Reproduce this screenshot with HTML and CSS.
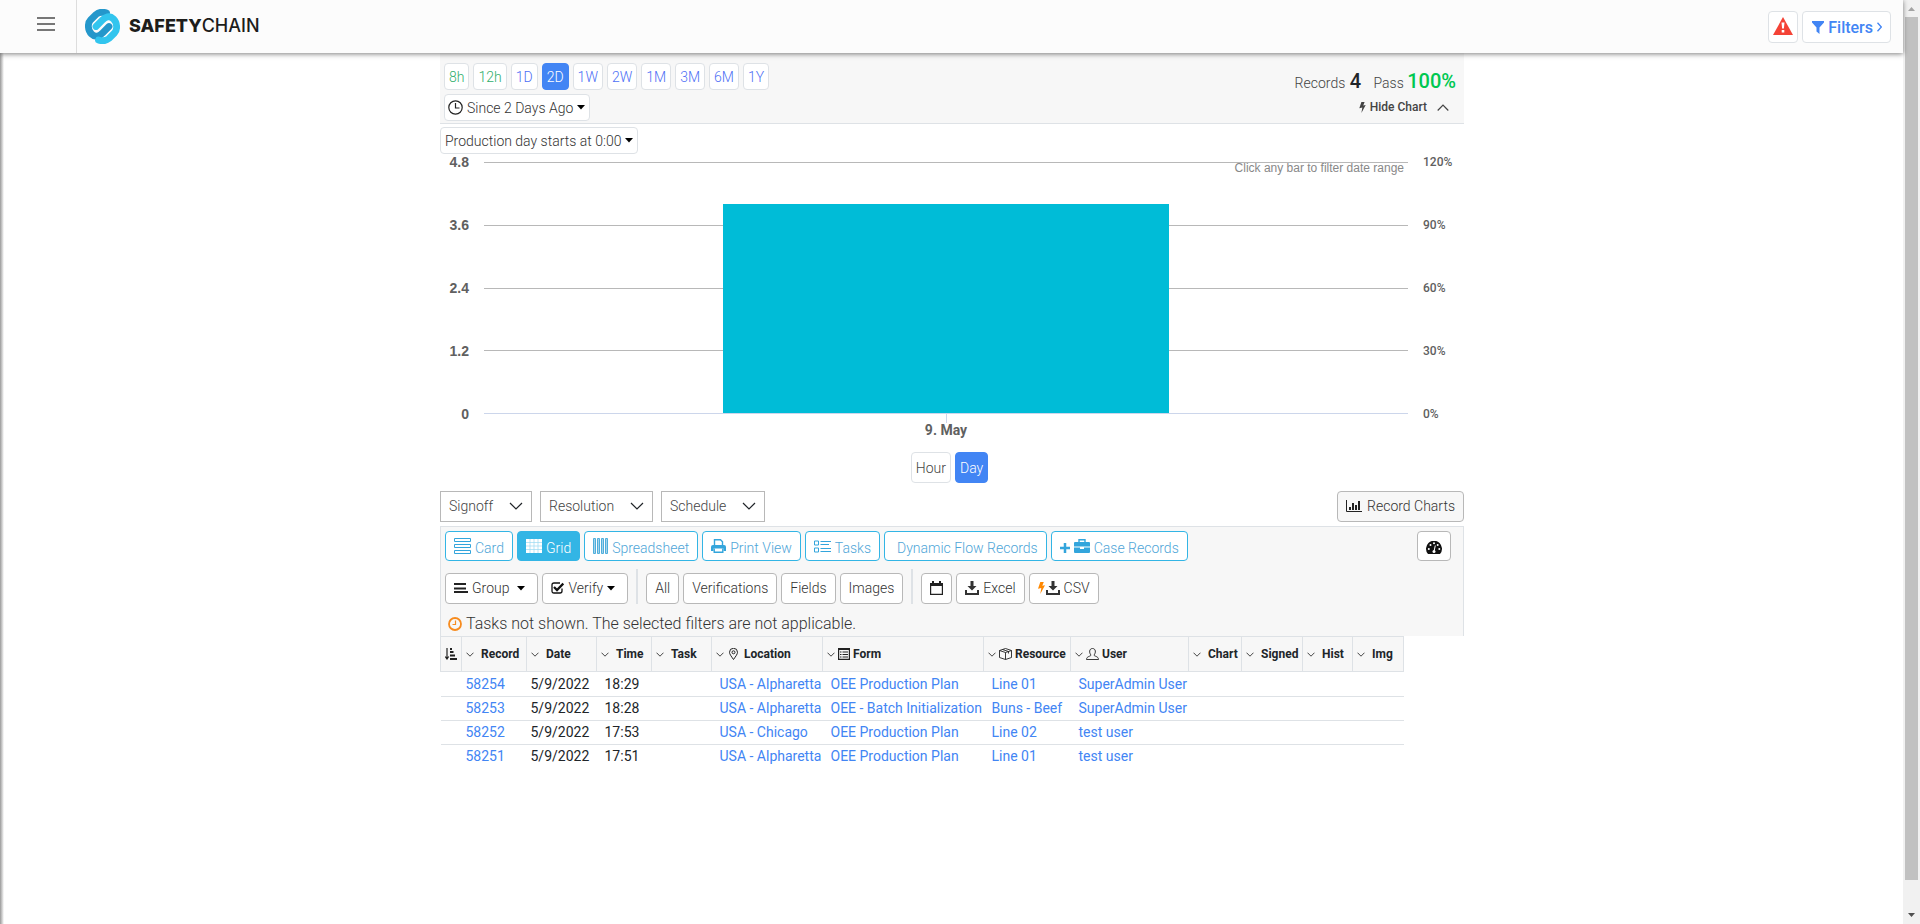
FILE: index.html
```html
<!DOCTYPE html>
<html lang="en">
<head>
<meta charset="utf-8">
<title>SafetyChain Records</title>
<link rel="stylesheet" href="styles.css">
</head>
<body>
<svg class="defs" aria-hidden="true">
  <symbol id="chev" viewBox="0 0 14 8"><path d="M1 1l6 6 6-6" fill="none" stroke="currentColor" stroke-width="1.2"/></symbol>
  <symbol id="chev-s" viewBox="0 0 8 5"><path d="M.5.7L4 4.2 7.500.7" fill="none" stroke="currentColor" stroke-width="1"/></symbol>
  <symbol id="caret" viewBox="0 0 8 5"><path d="M0 0h8L4 4.500z" fill="currentColor"/></symbol>
  <symbol id="download" viewBox="0 0 14 14"><path d="M5.500 0h3v5H11.500L7 9.500 2.500 5h3zM0 9h2v3h10V9h2v5H0z" fill="currentColor"/></symbol>
  <symbol id="bolt" viewBox="0 0 7 12"><path d="M2.300 0h3.500L4.300 3.800 7 3.300 2.300 12 3.300 6 0 6.700z" fill="currentColor"/></symbol>
</svg>
<div class="view">
  <header class="topbar">
    <button class="menu" aria-label="Menu"><svg width="18" height="14" viewBox="0 0 18 14"><path d="M0 1h18M0 7h18M0 13h18" stroke="#777" stroke-width="2"/></svg></button>
    <a class="brand" href="#">
      <svg width="35" height="35" viewBox="0 0 35 35" fill="none" stroke-width="6.800" stroke-linecap="round">
        <path d="M21.500 4C18 2.800 14 3 11 5.500L5.500 11C2.500 14 2.500 21 6.500 25S15 27 17.500 24L24 17.500" stroke="#2497cb"/>
        <path d="M13.500 31C17 32.200 21 32 24 29.500L29.500 24C32.500 21 32.500 14 28.500 10S20 8 17.500 11L11 17.500" stroke="#32c5ee"/>
      </svg>
      <span class="wordmark"><b>SAFETY</b>CHAIN</span>
    </a>
    <div class="top-actions">
      <button class="top-btn alert" aria-label="Alerts"><svg width="20" height="18" viewBox="0 0 20 18"><path d="M10 0l10 18H0z" fill="#f44336"/><path d="M8.500 5.500h3l-.6 6H9.100zM8.700 13h2.600v2.500H8.700z" fill="#fff"/></svg></button>
      <button class="top-btn filters"><svg width="12" height="13" viewBox="0 0 12 13"><path d="M0 0h12v1.500L7.500 6.500V13L4.500 10.500v-4L0 1.500z" fill="#4285f4"/></svg>Filters<svg width="5" height="10" viewBox="0 0 5 10"><path d="M.5.8L4.300 5 .5 9.200" fill="none" stroke="#4285f4" stroke-width="1.300"/></svg></button>
    </div>
  </header>
  <div class="page">
  <main class="content">
    <section class="summary">
      <div class="periods">
        <div class="row">
          <button class="pill green">8h</button><button class="pill green">12h</button><button class="pill">1D</button><button class="pill on">2D</button><button class="pill">1W</button><button class="pill">2W</button><button class="pill">1M</button><button class="pill">3M</button><button class="pill">6M</button><button class="pill">1Y</button>
        </div>
        <div class="row">
          <button class="pill dark since"><svg width="15" height="15" viewBox="0 0 15 15" fill="none" stroke="#222" stroke-width="1.200"><circle cx="7.500" cy="7.500" r="6.700"/><path d="M7.500 3v5h4"/></svg>Since 2 Days Ago<svg class="caret"><use href="#caret"/></svg></button>
        </div>
      </div>
      <div class="stats">
        <p class="totals"><span>Records</span> <strong class="count">4</strong> <span class="pass">Pass</span> <strong class="ok">100%</strong></p>
        <button class="hide-chart"><svg width="7" height="11"><use href="#bolt"/></svg>Hide Chart<svg class="up" width="12" height="7" viewBox="0 0 12 7"><path d="M.7 6.500L6 1l5.300 5.500" fill="none" stroke="#444" stroke-width="1.200"/></svg></button>
      </div>
    </section>
    <button class="pill dark day-start">Production day starts at 0:00<svg class="caret"><use href="#caret"/></svg></button>
    <section class="chart" aria-label="Records per day">
      <div class="axis left"><span>4.8</span><span>3.6</span><span>2.4</span><span>1.2</span><span>0</span></div>
      <div class="plot">
        <div class="lines"><i></i><i></i><i></i><i></i></div>
        <p class="hint">Click any bar to filter date range</p>
        <div class="bar"></div>
        <div class="tick"></div>
      </div>
      <div class="axis right"><span>120%</span><span>90%</span><span>60%</span><span>30%</span><span>0%</span></div>
      <div class="xlabel">9. May</div>
    </section>
    <div class="units"><button class="unit">Hour</button><button class="unit on">Day</button></div>
    <div class="selects">
      <label class="select"><select aria-label="Signoff"><option>Signoff</option></select><svg><use href="#chev"/></svg></label>
      <label class="select"><select aria-label="Resolution"><option>Resolution</option></select><svg><use href="#chev"/></svg></label>
      <label class="select"><select aria-label="Schedule"><option>Schedule</option></select><svg><use href="#chev"/></svg></label>
      <button class="tool charts"><svg width="16" height="12" viewBox="0 0 16 12"><path d="M.5 0v11.500H16" fill="none" stroke="#222" /><path d="M3 7h2v3H3zM6 3h2v7H6zM9 5h2v5H9zM12 1h2v9h-2z" fill="#222"/></svg>Record Charts</button>
    </div>
    <section class="panel">
      <div class="row views">
        <button class="view-btn"><svg width="17" height="16" viewBox="0 0 17 16" fill="none" stroke="#33a5dc"><path d="M.5.500h16v3H.5zM.5 6.500h16v3H.5zM.5 12.500h16v3H.5z"/></svg>Card</button>
        <button class="view-btn on"><svg width="16" height="14" viewBox="0 0 16 14"><path d="M0 0h16v14H0z" fill="#fff"/><path d="M0 3.500h16M0 7h16M0 10.500h16M4 0v14M8 0v14M12 0v14" stroke="#9bdaf2" stroke-width=".7"/></svg>Grid</button>
        <button class="view-btn"><svg width="15" height="16" viewBox="0 0 15 16" fill="#a5d3ea" stroke="#4eaedc"><path d="M.5.500h2v15h-2zM4.500.500h2v15h-2zM8.500.500h2v15h-2zM12.500.500h2v15h-2z"/></svg>Spreadsheet</button>
        <button class="view-btn"><svg width="15" height="14" viewBox="0 0 15 14"><path d="M3.500 7V.7h6l2 2V7" fill="none" stroke="#33a5dc" stroke-width="1.400"/><path d="M0 8q0-2 2-2h11q2 0 2 2v4h-2.500V9.500h-10V12H0z" fill="#33a5dc"/><path d="M3.200 9.500v3.800h8.600V9.500" fill="none" stroke="#33a5dc" stroke-width="1.400"/></svg>Print View</button>
        <button class="view-btn"><svg width="17" height="13" viewBox="0 0 17 13" fill="none" stroke="#33a5dc"><path d="M.5 1h4v4h-4zM.5 8h4v4h-4zM6.500 1.500H17M6.500 4.500H15M6.500 8.500H17M6.500 11.500H17"/></svg>Tasks</button>
        <button class="view-btn plain">Dynamic Flow Records</button>
        <button class="view-btn"><svg class="plus" width="10" height="10" viewBox="0 0 10 10"><path d="M5 0v10M0 5h10" stroke="#33a5dc" stroke-width="2.500"/></svg><svg width="16" height="14" viewBox="0 0 16 14"><path d="M5 3V.7h6V3" fill="none" stroke="#33a5dc" stroke-width="1.400"/><path d="M1 3h14q1 0 1 1v3.500H0V4q0-1 1-1zM0 8.500h6v1.500h4V8.500h6V13q0 1-1 1H1q-1 0-1-1z" fill="#33a5dc"/></svg>Case Records</button>
        <button class="tool gauge" aria-label="Dashboard"><svg width="16" height="13" viewBox="0 0 16 13"><path d="M2 13A8 8 0 1 1 14 13z" fill="#111"/><g fill="#fff"><circle cx="2.800" cy="8" r="1"/><circle cx="4.500" cy="4" r="1"/><circle cx="8" cy="2.300" r="1"/><circle cx="11.700" cy="4" r="1"/><circle cx="13.300" cy="8" r="1"/><circle cx="8" cy="10.500" r="1.500"/></g><path d="M8 10.500l1.300-6" stroke="#fff"/></svg></button>
      </div>
      <div class="row tools">
        <button class="tool drop"><svg width="14" height="10" viewBox="0 0 14 10" stroke="#222"><path d="M0 1h12M0 5.500h12M0 9h14" stroke-width="1.800"/></svg>Group<svg class="caret far"><use href="#caret"/></svg></button>
        <button class="tool drop"><svg width="13" height="12" viewBox="0 0 13 12" fill="none" stroke="#111"><path d="M11 6.500V9q0 2-2 2H3q-2 0-2-2V3q0-2 2-2h6" stroke-width="1.300"/><path d="M3 5l3 3 6.300-6.500" stroke-width="2.300"/></svg>Verify<svg class="caret"><use href="#caret"/></svg></button>
        <span class="sep"></span>
        <button class="tool">All</button><button class="tool">Verifications</button><button class="tool">Fields</button><button class="tool">Images</button>
        <span class="sep"></span>
        <button class="tool" aria-label="Calendar"><svg width="13" height="14" viewBox="0 0 13 14"><path d="M.6 3h11.800v10.400H.6z" fill="none" stroke="#222" stroke-width="1.200"/><path d="M0 2h13v3H0zM2 0h2v3H2zM9 0h2v3H9z" fill="#222"/></svg></button>
        <button class="tool"><svg width="14" height="14"><use href="#download"/></svg>Excel</button>
        <button class="tool"><svg class="bolt" width="7" height="12"><use href="#bolt"/></svg><svg width="14" height="14"><use href="#download"/></svg>CSV</button>
      </div>
      <p class="notice"><svg width="14" height="14" viewBox="0 0 14 14" fill="none" stroke="#f78b1e"><circle cx="7" cy="7" r="6" stroke-width="1.800"/><path d="M7.500 3.500v4H4.500" stroke-width="1.200"/></svg>Tasks not shown. The selected filters are not applicable.</p>
    </section>
    <table class="records">
      <colgroup><col class="w21"><col class="w65"><col class="w70"><col class="w55"><col class="w60"><col class="w111"><col class="w161"><col class="w87"><col class="w118"><col class="w53"><col class="w61"><col class="w50"><col class="w51"></colgroup>
      <thead><tr>
        <th aria-label="Sort"><div class="sort"><svg width="12" height="12" viewBox="0 0 12 12"><path d="M2 0v10M.3 8.500L2 11l1.700-2.500" fill="none" stroke="#222" stroke-width="1.200"/><path d="M5 1h2M5 4h3.500M5 7.500h5M5 11h7" stroke="#222" stroke-width="1.800"/></svg></div></th>
        <th><div><svg class="cs"><use href="#chev-s"/></svg>Record</div></th>
        <th><div><svg class="cs"><use href="#chev-s"/></svg>Date</div></th>
        <th><div><svg class="cs"><use href="#chev-s"/></svg>Time</div></th>
        <th><div><svg class="cs"><use href="#chev-s"/></svg>Task</div></th>
        <th><div class="ic"><svg class="cs"><use href="#chev-s"/></svg><svg class="pin" width="9" height="12" viewBox="0 0 9 12" fill="none" stroke="#222"><path d="M4.500 11.500C2 8 .5 6 .5 4.300a4 4 0 0 1 8 0C8.500 6 7 8 4.500 11.500z"/><circle cx="4.500" cy="4.300" r="1.500"/></svg>Location</div></th>
        <th><div class="ic"><svg class="cs"><use href="#chev-s"/></svg><svg width="12" height="12" viewBox="0 0 12 12" fill="none" stroke="#222"><path d="M.6.800h10.800v10.600H.6z" stroke-width="1.200"/><path d="M0 1h12" stroke-width="2"/><path d="M2 4h1.500M2 6.500h1.500M2 9h1.500M4.500 4H10M4.500 6.500H10M4.500 9H10"/></svg>Form</div></th>
        <th><div class="ic"><svg class="cs"><use href="#chev-s"/></svg><svg width="13" height="12" viewBox="0 0 13 12" fill="none" stroke="#222" stroke-width=".9"><path d="M.5 2.500L6.500.5l6 2v7l-6 2-6-2zM.5 2.500l6 2 6-2M6.500 4.500v7M3.500 1.500l6 2v2"/></svg>Resource</div></th>
        <th><div class="ic"><svg class="cs"><use href="#chev-s"/></svg><svg width="13" height="12" viewBox="0 0 13 12" fill="none" stroke="#222" stroke-width=".9"><path d="M5 7C3 5 3 .5 6.500.5S10 5 8 7c0 1.500 4.500 1 4.500 4.500H.5C.5 8 5 8.500 5 7z"/></svg>User</div></th>
        <th><div><svg class="cs"><use href="#chev-s"/></svg>Chart</div></th>
        <th><div><svg class="cs"><use href="#chev-s"/></svg>Signed</div></th>
        <th><div><svg class="cs"><use href="#chev-s"/></svg>Hist</div></th>
        <th><div><svg class="cs"><use href="#chev-s"/></svg>Img</div></th>
      </tr></thead>
      <tbody>
        <tr><td></td><td class="t4"><a href="#">58254</a></td><td class="t4">5/9/2022</td><td>18:29</td><td></td><td><a href="#">USA - Alpharetta</a></td><td><a href="#">OEE Production Plan</a></td><td><a href="#">Line 01</a></td><td><a href="#">SuperAdmin User</a></td><td></td><td></td><td></td><td></td></tr>
        <tr><td></td><td class="t4"><a href="#">58253</a></td><td class="t4">5/9/2022</td><td>18:28</td><td></td><td><a href="#">USA - Alpharetta</a></td><td><a href="#">OEE - Batch Initialization</a></td><td><a href="#">Buns - Beef</a></td><td><a href="#">SuperAdmin User</a></td><td></td><td></td><td></td><td></td></tr>
        <tr><td></td><td class="t4"><a href="#">58252</a></td><td class="t4">5/9/2022</td><td>17:53</td><td></td><td><a href="#">USA - Chicago</a></td><td><a href="#">OEE Production Plan</a></td><td><a href="#">Line 02</a></td><td><a href="#">test user</a></td><td></td><td></td><td></td><td></td></tr>
        <tr><td></td><td class="t4"><a href="#">58251</a></td><td class="t4">5/9/2022</td><td>17:51</td><td></td><td><a href="#">USA - Alpharetta</a></td><td><a href="#">OEE Production Plan</a></td><td><a href="#">Line 01</a></td><td><a href="#">test user</a></td><td></td><td></td><td></td><td></td></tr>
      </tbody>
    </table>
  </main>
  </div>
</div>
<div class="scroll" aria-hidden="true">
  <svg width="17" height="17" viewBox="0 0 17 17"><path d="M5 11h7L8.500 7z" fill="#a3a3a3"/></svg>
  <div class="thumb"></div>
  <svg width="17" height="17" viewBox="0 0 17 17"><path d="M5 6h7l-3.500 4z" fill="#505050"/></svg>
</div>
</body>
</html>
```

FILE: styles.css
```css
* { box-sizing: border-box; }
body {
  margin: 0;
  display: flex;
  height: 100vh;
  font-family: Roboto, "Liberation Sans", sans-serif;
  font-size: 14px;
  font-weight: 300;
  color: #212529;
  background: #fff;
}
button, select { font: inherit; color: inherit; margin: 0; cursor: pointer; }
a { color: #4285f4; text-decoration: none; }
p { margin: 0; }
svg { flex: none; display: block; }
.defs { position: absolute; width: 0; height: 0; }

.view { flex: 1; min-width: 0; display: flex; flex-direction: column; }
.topbar {
  display: flex;
  align-items: center;
  height: 53px;
  flex: none;
  background: #fcfcfc;
  box-shadow: 0 1px 5px rgba(0, 0, 0, .5);
  z-index: 1;
}
.menu {
  width: 77px;
  height: 53px;
  padding: 0 0 5px 37px;
  border: 0;
  border-right: 1px solid #ddd;
  background: none;
}
.brand { display: flex; align-items: center; gap: 9px; padding: 0 0 1px 8px; color: #1d1d1b; }
.wordmark { font: 500 18px/20px Inter, sans-serif; }
.wordmark b { font-weight: 800; }
.top-actions { display: flex; gap: 4px; margin-left: auto; padding-right: 12px; }
.top-btn {
  display: flex;
  align-items: center;
  height: 32px;
  border: 1px solid #dee2e6;
  border-radius: 4px;
  background: #fff;
}
.alert { padding: 0 4px 2px; }
.filters { gap: 4px; padding: 1px 8px 0 9px; font-size: 16px; font-weight: 500; color: #4285f4; }

.page { flex: 1; padding-left: 1px; background: linear-gradient(to right, #999, #fff 4px); }
.content { max-width: 1024px; margin: 0 auto; }
.row { display: flex; gap: 4px; }

.summary {
  display: flex;
  justify-content: space-between;
  padding: 10px 8px 2px 4px;
  border-bottom: 1px solid #dee2e6;
  background: #f7f7f7;
}
.periods { display: grid; gap: 4px; }
.pill {
  display: flex;
  align-items: center;
  gap: 4px;
  height: 27px;
  padding: 0 4px;
  border: 1px solid #dee2e6;
  border-radius: 4px;
  background: #fff;
  color: #4d6ff5;
}
.pill.green { color: #2fae6b; }
.pill.on, .unit.on { background: #4285f4; border-color: #4285f4; color: #fff; }
.pill.dark { color: #333; }
.pill.since { padding: 0 4px 0 3px; }
.caret { width: 8px; height: 5px; color: #000; }
.caret.far { margin-left: 4px; }
.day-start { margin-top: 3px; }
.stats { display: flex; flex-direction: column; align-items: flex-end; padding-top: 6px; }
.totals { line-height: 24px; color: #444; }
.totals strong { font-size: 20px; font-weight: 500; color: #212529; }
.totals .ok { color: #00c851; }
.totals .count { margin-left: 1px; }
.pass { margin-left: 9px; }
.hide-chart {
  display: flex;
  align-items: center;
  gap: 4px;
  height: 24px;
  margin-right: 7px;
  padding: 0;
  border: 0;
  background: none;
  font-size: 12px;
  font-weight: 500;
  color: #444;
}
.up { margin-left: 6px; }

.chart { display: grid; grid-template-columns: 44px 1fr 56px; padding-top: 1px; }
.axis {
  display: flex;
  flex-direction: column;
  justify-content: space-between;
  height: 266px;
  line-height: 14px;
  color: #606060;
}
.left { align-items: flex-end; padding-right: 15px; font-family: "Liberation Sans", sans-serif; font-weight: 700; }
.right { padding-left: 15px; font-size: 12px; font-weight: 500; }
.plot { display: grid; margin: 7px 0; border-bottom: 1px solid #ccd6eb; }
.plot > * { grid-area: 1 / 1; }
.lines { display: grid; grid-template-rows: repeat(4, 1fr); }
.lines i { border-top: 1px solid #b8b8b8; }
.bar { align-self: end; justify-self: center; width: 48.2%; height: 83.3%; background: #00bcd7; }
.tick { align-self: end; justify-self: center; width: 1px; height: 10px; margin-bottom: -10px; background: #ccd6eb; }
.hint { justify-self: end; padding-right: 4px; font: 12px/12px "Liberation Sans", sans-serif; color: #888; }
.xlabel {
  grid-column: 2;
  justify-self: center;
  padding-top: 2px;
  font-weight: 700;
  line-height: 14px;
  color: #606060;
}

.units { display: flex; justify-content: center; gap: 4px; margin: 15px 0 8px; padding-right: 5px; }
.unit { height: 31px; padding: 0 4px; border: 1px solid #dee2e6; border-radius: 4px; background: #fff; color: #444; }
.selects { display: flex; gap: 8px; margin-bottom: 4px; }
.select { display: grid; align-items: center; }
.select > * { grid-area: 1 / 1; }
.select select {
  appearance: none;
  height: 31px;
  padding: 0 37px 1px 8px;
  border: 1px solid #b8b8b8;
  border-radius: 0;
  background: #fff;
  color: #444;
}
.select svg { width: 14px; height: 8px; justify-self: end; margin: 0 9px 2px 0; pointer-events: none; }
.tool {
  display: flex;
  align-items: center;
  gap: 4px;
  height: 31px;
  padding: 0 8px 1px;
  border: 1px solid #b8b8b8;
  border-radius: 4px;
  background: #fff;
  color: #333;
}
.drop { padding-right: 12px; }
.charts { gap: 5px; margin-left: auto; background: #f7f7f7; }

.panel { padding: 4px 12px 0 4px; border: 1px solid #dee2e6; border-bottom: 0; background: #f7f7f7; }
.view-btn {
  display: flex;
  align-items: center;
  gap: 4px;
  height: 30px;
  padding: 4px 8px 0;
  border: 1px solid #33b5e5;
  border-radius: 4px;
  background: #fff;
  color: #4fa6d8;
}
.view-btn svg { margin-bottom: 4px; }
.view-btn .plus { margin-bottom: 1px; }
.view-btn.on { background: #33b5e5; color: #fff; }
.view-btn.plain { padding-left: 12px; }
.gauge { height: 30px; margin-left: auto; padding-top: 3px; }
.tools { align-items: flex-end; margin-top: 8px; }
.sep { width: 2px; height: 35px; margin: 0 4px; background: #dee2e6; }
.bolt { color: #ff8800; margin-right: -3px; }
.notice { display: flex; align-items: center; gap: 4px; height: 32px; padding: 8px 3px 0; font-size: 16px; line-height: 24px; color: #333; }

.records { table-layout: fixed; width: 963px; border-collapse: collapse; font-weight: 400; }
.w21 { width: 21px; }
.w50 { width: 50px; }
.w51 { width: 51px; }
.w53 { width: 53px; }
.w55 { width: 55px; }
.w60 { width: 60px; }
.w61 { width: 61px; }
.w65 { width: 65px; }
.w70 { width: 70px; }
.w87 { width: 87px; }
.w111 { width: 111px; }
.w118 { width: 118px; }
.w161 { width: 161px; }
.records th { height: 35px; padding: 0; border: 1px solid #dee2e6; background: #f7f7f7; font-size: 12px; font-weight: 700; }
.records th div { display: flex; align-items: center; gap: 7px; padding-left: 4px; white-space: nowrap; }
.records th .ic { gap: 3px; }
.records th .pin { margin: 0 3px 0 2px; }
.cs { width: 8px; height: 5px; color: #444; }
.records td { height: 24px; padding: 0 0 1px 8px; border-bottom: 1px solid #dee2e6; line-height: 20px; white-space: nowrap; }
.records td.t4 { padding-left: 4px; }
.records tbody tr:first-child td { height: 25px; }
.records tr:last-child td { border-bottom: 0; }

.scroll { display: flex; flex-direction: column; width: 17px; background: #f1f1f1; }
.thumb { flex: 1; margin: 0 2px 27px; background: #c1c1c1; }
```
